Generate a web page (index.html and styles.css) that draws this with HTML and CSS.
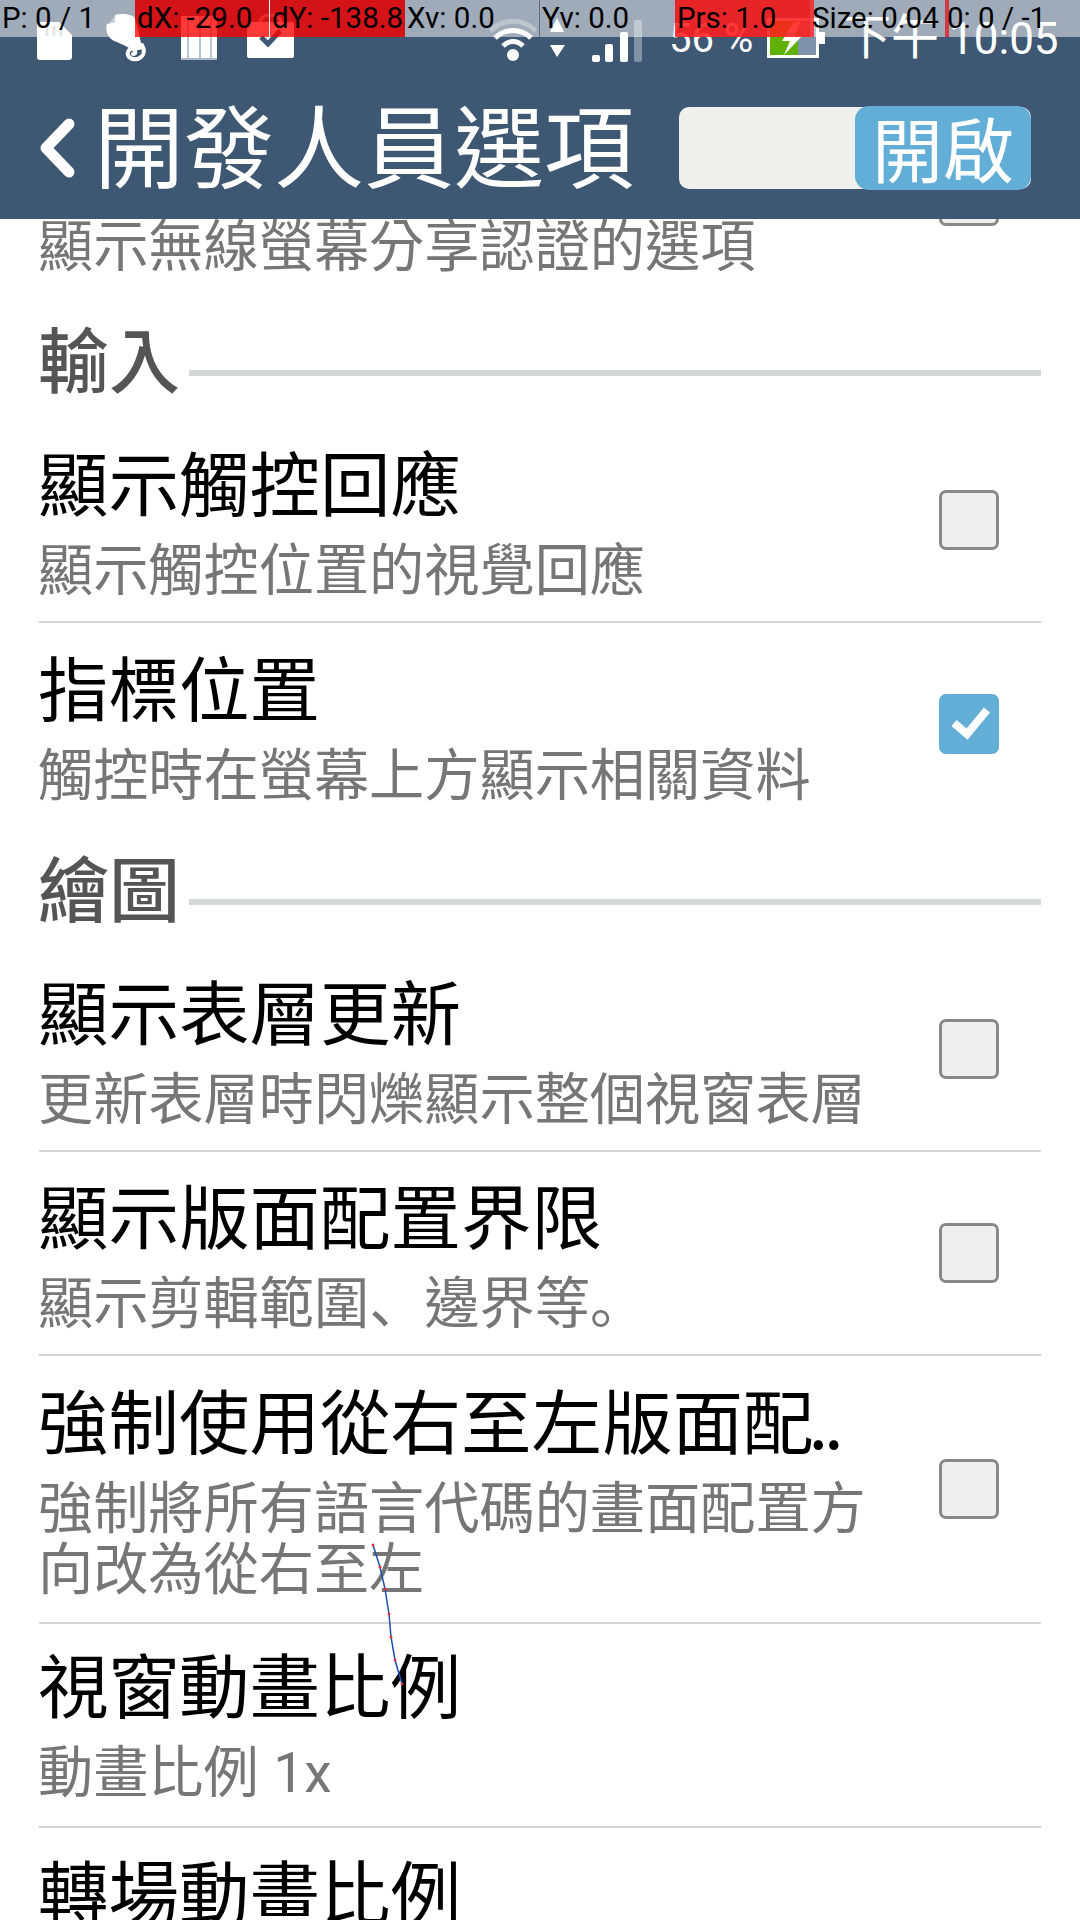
FILE: index.html
```html
<!DOCTYPE html>
<html lang="zh-Hant">
<head>
<meta charset="utf-8">
<title>開發人員選項</title>
<link rel="stylesheet" href="styles.css">
</head>
<body>
<div class="screen">
  <header class="appbar">
    <div class="status">
      <svg class="ic ic-sd" viewBox="0 0 35 48"><path d="M3 8h19l13 13v22a3 3 0 0 1-3 3H3a3 3 0 0 1-3-3V11a3 3 0 0 1 3-3z" fill="#fff"/><path d="M10 12v10M17 12v10M24 14v8" stroke="#c9ced4" stroke-width="3"/></svg>
      <svg class="ic ic-ev" viewBox="0 0 40 48"><path d="M9 1C15-1 24 0 28 3c2 3 3 9 5 17 1 6 3 11 3 15-3 2-8 1-13-1-3-2-5-3-8-4-2-1-4-2-7-3C1 23-1 16 1 10l8-2z" fill="#fff"/><path d="M9 2v6l-7 2z" fill="#8fa0b3"/><path d="M36 31c3 5 2 10-1 12-3 3-9 3-12 0-3-4 0-9 4-8 3 1 3 5 0 5" fill="none" stroke="#fff" stroke-width="4" stroke-linecap="round"/></svg>
      <svg class="ic ic-lib" viewBox="0 0 36 48"><path d="M0 2h36v44H0z" fill="#fff"/><path d="M7 2v44M19 2v44M30 2v44" stroke="#b9c6d4" stroke-width="2"/><path d="M0 44h36v2H0z" fill="#a9b8c8"/></svg>
      <svg class="ic ic-cal" viewBox="0 0 47 48"><path d="M13 9c0-11 21-11 21 0" fill="none" stroke="#fff" stroke-opacity=".6" stroke-width="3"/><rect y="8" width="47" height="36" rx="2" fill="#fff"/><path d="M14 23l7 7 12-13" fill="none" stroke="#3e5773" stroke-width="5"/></svg>
      <svg class="ic ic-wifi" viewBox="0 0 48 48"><path d="M1 17c13-13 33-13 46 0" fill="none" stroke="#fff" stroke-opacity=".3" stroke-width="5"/><path d="M6 24c10-10 26-10 36 0" fill="none" stroke="#fff" stroke-width="5"/><path d="M14 32c6-6 14-6 20 0" fill="none" stroke="#fff" stroke-width="5"/><circle cx="24" cy="41" r="6" fill="#fff"/></svg>
      <svg class="ic ic-arrows" viewBox="0 0 16 48"><path d="M8 4l7 14H1z" fill="#fff"/><path d="M1 31h15l-8 12z" fill="#fff"/></svg>
      <svg class="ic ic-signal" viewBox="0 0 50 48"><rect y="41" width="8" height="7" rx="2" fill="#fff"/><rect x="13" y="30" width="8" height="18" rx="2" fill="#fff"/><rect x="28" y="18" width="8" height="30" rx="2" fill="#fff"/><rect x="42" y="6" width="8" height="42" rx="2" fill="#fff" fill-opacity=".35"/></svg>
      <span class="pct">56 %</span>
      <svg class="ic ic-batt" viewBox="0 0 58 48"><rect x="1.500" y="5.500" width="49" height="37" fill="#7e93aa" stroke="#fff" stroke-width="3"/><rect x="3" y="7" width="28" height="34" fill="#5fb300"/><path d="M51 18h7v12h-7z" fill="#fff"/><path d="M27 8L15 27h8l-6 14 18-19h-8l7-14z" fill="#fff"/></svg>
      <span class="clock"><span class="ampm">下午</span>10:05</span>
    </div>
    <div class="actionbar">
      <svg class="back" viewBox="0 0 36 60"><path d="M30 6L7 30l23 24" fill="none" stroke="#fff" stroke-width="11" stroke-linecap="round" stroke-linejoin="round"/></svg>
      <h1 class="page-title">開發人員選項</h1>
      <div class="toggle"><span class="toggle-thumb">開啟</span></div>
    </div>
  </header>

  <main class="list">
    <div class="row">
      <div class="row-text">
        <div class="row-title">顯示無線螢幕分享認證</div>
        <div class="row-sub">顯示無線螢幕分享認證的選項</div>
      </div>
      <span class="check"></span>
    </div>

    <div class="section"><span class="section-name">輸入</span><span class="section-line"></span></div>
    <div class="row ruled">
      <div class="row-text">
        <div class="row-title">顯示觸控回應</div>
        <div class="row-sub">顯示觸控位置的視覺回應</div>
      </div>
      <span class="check"></span>
    </div>
    <div class="row">
      <div class="row-text">
        <div class="row-title">指標位置</div>
        <div class="row-sub">觸控時在螢幕上方顯示相關資料</div>
      </div>
      <span class="check on"><svg viewBox="0 0 60 60"><path d="M15 29l13 11 20-24" fill="none" stroke="#fff" stroke-width="8"/></svg></span>
    </div>

    <div class="section"><span class="section-name">繪圖</span><span class="section-line"></span></div>
    <div class="row ruled">
      <div class="row-text">
        <div class="row-title">顯示表層更新</div>
        <div class="row-sub">更新表層時閃爍顯示整個視窗表層</div>
      </div>
      <span class="check"></span>
    </div>
    <div class="row ruled">
      <div class="row-text">
        <div class="row-title">顯示版面配置界限</div>
        <div class="row-sub">顯示剪輯範圍<span class="punct" lang="zh-Hans">、</span>邊界等<span class="punct" lang="zh-Hans">。</span></div>
      </div>
      <span class="check"></span>
    </div>
    <div class="row ruled tall">
      <div class="row-text">
        <div class="row-title">強制使用從右至左版面配<span class="dots">..</span></div>
        <div class="row-sub">強制將所有語言代碼的畫面配置方向改為從右至左</div>
      </div>
      <span class="check"></span>
    </div>
    <div class="row ruled">
      <div class="row-text">
        <div class="row-title">視窗動畫比例</div>
        <div class="row-sub">動畫比例 <span class="latin">1x</span></div>
      </div>
    </div>
    <div class="row cut">
      <div class="row-text">
        <div class="row-title">轉場動畫比例</div>
      </div>
    </div>
  </main>

  <div class="pointer-bar">
    <span class="cell c1">P: 0 / 1</span>
    <span class="cell c2 hot">dX: -29.0</span>
    <span class="cell c3 hot">dY: -138.8</span>
    <span class="cell c4">Xv: 0.0</span>
    <span class="cell c5">Yv: 0.0</span>
    <span class="cell c6 warm">Prs: 1.0</span>
    <span class="cell c7">Size: 0.04</span>
    <span class="cell c8">0: 0 / -1</span>
  </div>

  <svg class="trail" viewBox="0 0 1080 1920">
    <polyline points="373,1545 380,1567 385,1589 389,1614 391,1637 395,1660 402,1684" fill="none" stroke="#1a4fb4" stroke-width="1.500"/>
    <g fill="#e0334a">
      <circle cx="373" cy="1545" r="1.500"/><circle cx="380" cy="1567" r="1.500"/><circle cx="385" cy="1589" r="1.500"/><circle cx="389" cy="1614" r="1.500"/><circle cx="391" cy="1637" r="1.500"/><circle cx="395" cy="1660" r="1.500"/><circle cx="402" cy="1684" r="1.500"/>
    </g>
  </svg>
</div>
</body>
</html>
```
FILE: styles.css
```css
* { box-sizing: border-box; }
html, body { margin: 0; padding: 0; }
body {
  width: 1080px;
  height: 1920px;
  overflow: hidden;
  background: #fff;
  font-family: "Noto Sans CJK TC", Roboto, sans-serif;
}
.screen {
  position: relative;
  width: 1080px;
  height: 1920px;
  overflow: hidden;
}

/* App bar */
.appbar {
  position: relative;
  z-index: 2;
  height: 219px;
  background: #3e5773;
}
.status {
  display: flex;
  align-items: flex-start;
  height: 76px;
  padding: 14px 0 0 37px;
}
.ic { height: 48px; flex: none; display: block; }
.ic-sd { width: 35px; }
.ic-ev { width: 40px; margin-left: 34px; }
.ic-lib { width: 36px; margin-left: 35px; }
.ic-cal { width: 47px; margin-left: 30px; }
.ic-wifi { width: 48px; margin-left: 195px; }
.ic-arrows { width: 16px; margin-left: 12px; }
.ic-signal { width: 50px; margin-left: 27px; }
.pct {
  margin-left: 27px;
  font: 40px/50px Roboto, sans-serif;
  color: #fff;
  width: 84px;
  flex: none;
  white-space: nowrap;
}
.ic-batt { width: 58px; margin-left: 14px; }
.clock {
  margin-left: 18px;
  font: 44px/48px Roboto, "Noto Sans CJK TC", sans-serif;
  color: #fff;
  white-space: nowrap;
  flex: none;
}
.ampm {
  margin-right: 10px;
  font-size: 48px;
  line-height: 48px;
}
.actionbar {
  display: flex;
  align-items: center;
  height: 143px;
  padding-left: 39px;
}
.back { width: 36px; height: 60px; flex: none; }
.page-title {
  margin: 0 0 12px 19px;
  font-size: 90px;
  font-weight: 400;
  line-height: 110px;
  color: #fff;
  white-space: nowrap;
  flex: none;
}
.toggle {
  display: flex;
  justify-content: flex-end;
  align-items: center;
  width: 352px;
  height: 82px;
  margin-left: 45px;
  border-radius: 10px;
  background: #efefed;
  flex: none;
}
.toggle-thumb {
  width: 176px;
  height: 84px;
  flex: none;
  border-radius: 14px;
  background: #62aed6;
  color: #fff;
  font-size: 71px;
  line-height: 80px;
  text-align: center;
}

/* List */
.list {
  margin-top: -125px;
  padding: 0 39px;
}
.row {
  display: flex;
  align-items: center;
  height: 204px;
}
.row.tall { height: 268px; }
.row.ruled { border-bottom: 2px solid #d4d4d4; }
.row.cut { align-items: flex-start; padding-top: 5px; }
.row-text {
  flex: 1;
  min-width: 0;
  margin-left: -1px;
  padding-bottom: 20px;
}
.row-title {
  font-size: 70.500px;
  line-height: 112px;
  color: #000;
  white-space: nowrap;
}
.dots { margin-left: -5px; letter-spacing: -4px; }
.row-sub {
  width: 840px;
  font-size: 55.200px;
  line-height: 61px;
  color: #767676;
}
.punct { font-family: "Noto Sans CJK SC", sans-serif; }
.latin { margin-left: 2px; font-family: Roboto, sans-serif; }
.check {
  width: 60px;
  height: 60px;
  margin-right: 42px;
  flex: none;
  border: 3px solid #888;
  border-radius: 7px;
  background: #efefef;
}
.check.on { margin-bottom: 2px; border: 0; background: #62aed6; }
.check svg { display: block; width: 60px; height: 60px; }
.section {
  display: flex;
  align-items: center;
  height: 121px;
  padding-bottom: 6px;
}
.section-name {
  flex: none;
  margin-left: -1px;
  font-size: 71px;
  font-weight: 500;
  line-height: 84px;
  color: #555;
}
.section-line {
  flex: 1;
  height: 6px;
  margin: 35px 0 0 9px;
  background: #d5d8d7;
}

/* Pointer location debug overlay */
.pointer-bar {
  position: absolute;
  z-index: 3;
  top: 0;
  left: 0;
  display: flex;
  width: 1080px;
  height: 37px;
  font: 29.500px/36px Roboto, sans-serif;
  color: #000;
}
.cell {
  width: 135px;
  height: 37px;
  padding-left: 2px;
  flex: none;
  background: rgba(255, 255, 255, .5);
  white-space: nowrap;
}
.cell.hot { background: rgba(255, 0, 0, .78); }
.cell.warm { background: rgba(255, 30, 30, .88); }
.c2 { box-shadow: inset -1px 0 0 #fff; }
.c4 { box-shadow: inset -1px 0 0 rgba(62, 87, 115, .7); }
.c7 { box-shadow: inset 4px 0 0 rgba(255, 30, 30, .8); }
.c8 { box-shadow: inset 4px 0 0 rgba(220, 30, 40, .8); }

.trail {
  position: absolute;
  z-index: 3;
  top: 0;
  left: 0;
  width: 1080px;
  height: 1920px;
  pointer-events: none;
}
```
